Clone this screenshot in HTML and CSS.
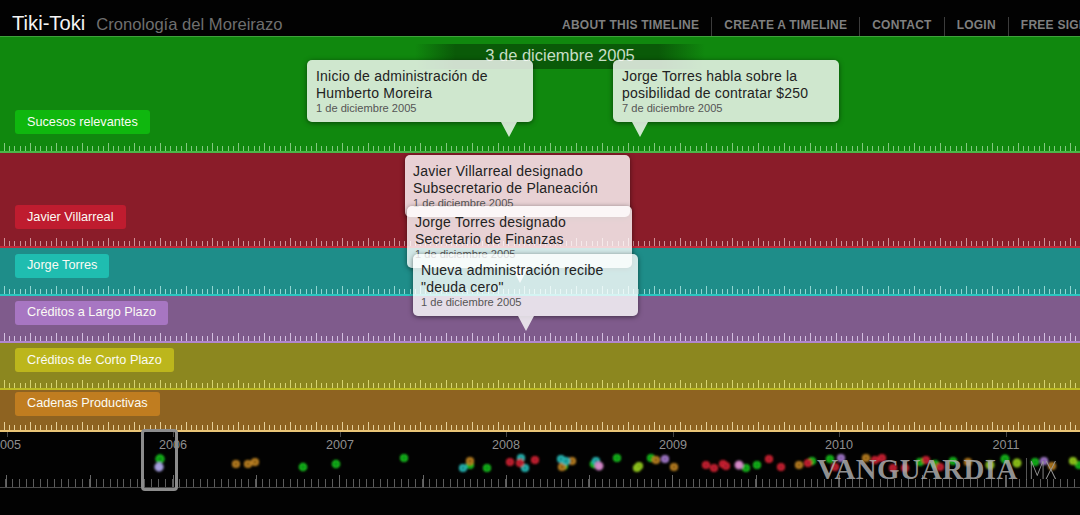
FILE: index.html
```html
<!DOCTYPE html>
<html lang="es">
<head>
<meta charset="utf-8">
<title>Tiki-Toki</title>
<link rel="stylesheet" href="styles.css">
</head>
<body>
<div class="page">
  <header class="top">
    <div class="brand"><span class="logo">Tiki-Toki</span><span class="subtitle">Cronología del Moreirazo</span></div>
    <nav class="nav">
      <a>About this timeline</a><a>Create a timeline</a><a>Contact</a><a>Login</a><a>Free sign up</a>
    </nav>
  </header>

  <main class="bands">
    <section class="band green"><span class="tag">Sucesos relevantes</span><div class="ruler"></div></section>
    <section class="band red"><span class="tag">Javier Villarreal</span><div class="ruler"></div></section>
    <section class="band teal"><span class="tag">Jorge Torres</span><div class="ruler"></div></section>
    <section class="band purple"><span class="tag">Créditos a Largo Plazo</span><div class="ruler"></div></section>
    <section class="band olive"><span class="tag">Créditos de Corto Plazo</span><div class="ruler"></div></section>
    <section class="band brown"><span class="tag">Cadenas Productivas</span><div class="ruler"></div></section>

    <div class="current-date">3 de diciembre 2005</div>

    <article class="card c1 tail-right"><h3>Inicio de administración de Humberto Moreira</h3><p>1 de diciembre 2005</p></article>
    <article class="card c2 tail-left"><h3>Jorge Torres habla sobre la posibilidad de contratar $250</h3><p>7 de diciembre 2005</p></article>
    <article class="card c3"><h3>Javier Villarreal designado Subsecretario de Planeación</h3><p>1 de diciembre 2005</p></article>
    <article class="card c4 tail-mid"><h3>Jorge Torres designado Secretario de Finanzas</h3><p>1 de diciembre 2005</p></article>
    <article class="card c5 tail-mid"><h3>Nueva administración recibe "deuda cero"</h3><p>1 de diciembre 2005</p></article>
  </main>

  <footer class="mini">
    <span class="year y05">2005</span>
    <span class="year y06">2006</span>
    <span class="year y07">2007</span>
    <span class="year y08">2008</span>
    <span class="year y09">2009</span>
    <span class="year y10">2010</span>
    <span class="year y11">2011</span>
    <svg class="dots" width="1080" height="83" viewBox="0 432 1080 83" aria-hidden="true">
      <defs><filter id="soft" x="-50%" y="-50%" width="200%" height="200%"><feGaussianBlur stdDeviation="1"/></filter></defs>
      <g filter="url(#soft)" stroke-width="2.2">
        <g class="d-green">
          <circle cx="160" cy="459" r="3.6"/><circle cx="303" cy="467" r="3.2"/><circle cx="336" cy="464" r="3.2"/><circle cx="404" cy="458" r="3"/><circle cx="470" cy="465" r="3"/><circle cx="487" cy="468" r="3"/><circle cx="564" cy="466" r="3"/><circle cx="594" cy="464" r="3.2"/><circle cx="617" cy="458" r="3"/><circle cx="651" cy="458" r="3"/><circle cx="746" cy="468" r="3"/><circle cx="757" cy="465" r="3"/><circle cx="812" cy="461" r="3"/><circle cx="830" cy="459" r="3"/><circle cx="920" cy="462" r="3"/><circle cx="935" cy="464" r="3"/><circle cx="953" cy="461" r="3"/><circle cx="1005" cy="459" r="3.4"/><circle cx="1035" cy="462" r="3"/><circle cx="1079" cy="465" r="3"/>
        </g>
        <g class="d-lav"><circle cx="159" cy="467" r="3.6"/></g>
        <g class="d-orange">
          <circle cx="236" cy="464" r="3"/><circle cx="248" cy="464" r="3"/><circle cx="255" cy="462" r="3"/><circle cx="470" cy="461" r="3"/><circle cx="562" cy="467" r="3"/><circle cx="572" cy="461" r="3"/><circle cx="656" cy="460" r="3"/><circle cx="674" cy="467" r="3"/><circle cx="799" cy="465" r="3"/><circle cx="866" cy="458" r="3"/><circle cx="968" cy="462" r="3"/><circle cx="1052" cy="466" r="3"/>
        </g>
        <g class="d-teal">
          <circle cx="463" cy="468" r="3"/><circle cx="521" cy="458" r="3"/><circle cx="525" cy="468" r="3"/><circle cx="561" cy="459" r="3"/><circle cx="566" cy="461" r="3"/><circle cx="596" cy="461" r="3"/>
        </g>
        <g class="d-red">
          <circle cx="510" cy="462" r="3"/><circle cx="520" cy="463" r="3"/><circle cx="535" cy="460" r="3"/><circle cx="706" cy="465" r="3"/><circle cx="714" cy="468" r="3"/><circle cx="723" cy="464" r="3"/><circle cx="726" cy="466" r="3"/><circle cx="769" cy="459" r="3"/><circle cx="781" cy="467" r="3"/><circle cx="808" cy="463" r="3"/><circle cx="835" cy="467" r="3"/><circle cx="875" cy="460" r="3"/><circle cx="882" cy="458" r="3"/><circle cx="893" cy="468" r="3"/><circle cx="905" cy="468" r="3"/><circle cx="926" cy="460" r="3"/><circle cx="940" cy="467" r="3"/>
        </g>
        <g class="d-pink"><circle cx="599" cy="466" r="3.4"/><circle cx="739" cy="465" r="3.4"/></g>
        <g class="d-lime"><circle cx="637" cy="468" r="3"/><circle cx="639" cy="466" r="3"/><circle cx="990" cy="465" r="3.4"/><circle cx="1017" cy="463" r="3.4"/><circle cx="1073" cy="461" r="3"/></g>
        <g class="d-purple"><circle cx="665" cy="459" r="3"/><circle cx="841" cy="458" r="3"/><circle cx="1044" cy="461" r="3"/></g>
      </g>
    </svg>
    <div class="mini-ruler"></div>
    <div class="window"></div>
    <div class="watermark"><span class="wm-name">VANGUARDIA</span><span class="wm-mx">MX</span></div>
  </footer>
</div>
</body>
</html>
```
FILE: styles.css
```css
* { box-sizing: border-box; }
html, body { margin: 0; height: 515px; background: #000; overflow: hidden; }
body { font-family: "Liberation Sans", Arial, sans-serif; }
.page { width: 1080px; height: 515px; display: flex; flex-direction: column; overflow: hidden; }

.top { height: 36px; flex: none; display: flex; justify-content: space-between; background: #020202; white-space: nowrap; }
.brand { display: flex; align-items: baseline; padding: 12px 0 0 12px; }
.logo { font-size: 20.2px; line-height: 22px; color: #f4f4f4; }
.subtitle { font-size: 16.6px; color: #6f6f6f; margin-left: 11px; }
.nav { display: flex; align-items: flex-end; flex: none; width: 518px; overflow: hidden; }
.nav a { flex: none; height: 19px; padding: 1px 12px 0; font-size: 12px; font-weight: bold; text-transform: uppercase; color: #7f7f7f; border-right: 1px solid #3c3c3c; letter-spacing: 0.24px; }
.nav a:first-child { padding-left: 0; }

.bands { position: relative; height: 396px; flex: none; display: flex; flex-direction: column; }
.band { display: flex; flex-direction: column; justify-content: flex-end; align-items: flex-start; overflow: hidden; }
.ruler {
  width: 100%; flex: none; height: 12px; margin-top: 6px; filter: blur(.35px);
  background:
    repeating-linear-gradient(90deg, transparent 0 4px, var(--tick) 4px 5px, transparent 5px 26px) 0 2px / 100% 8px no-repeat,
    repeating-linear-gradient(90deg, transparent 0 4px, var(--tick) 4px 5px, transparent 5px 5.2px) 0 5px / 100% 5px no-repeat;
  border-bottom: 2px solid var(--line);
}
.green .ruler, .red .ruler { margin-top: 7px; }
.tag { margin-left: 15px; height: 24px; padding: 0 12px; line-height: 23px; font-size: 12.7px; color: #fbfbf4; border-radius: 3px; background: var(--pill); white-space: nowrap; }
.green .tag, .red .tag, .olive .tag { line-height: 25px; }

.green  { height: 117px; background: #10880e; border-top: 1px solid #3fa23c; --pill: #0fb70e; --tick: #82c880; --line: #4bb648; }
.red    { height: 95px;  background: #8a1c29; --pill: #bf1c2f; --tick: #cf8f97; --line: #c42a3b; }
.teal   { height: 48px;  background: #1e8d89; --pill: #1fbdb0; --tick: #92d6d2; --line: #2ac7c1; }
.purple { height: 47px;  background: #7f5b8c; --pill: #a776c2; --tick: #d3bfe0; --line: #b187cf; }
.olive  { height: 47px;  background: #8c871f; --pill: #bcb61c; --tick: #d7d470; --line: #bdbb22; }
.brown  { height: 42px;  background: #8e6321; --pill: #c07d20; --tick: #e6cf98; --line: #e9c477; }
.brown .ruler { margin-top: 4px; }

.current-date { position: absolute; left: 415px; top: 8px; width: 290px; height: 25px; line-height: 23px; text-align: center; font-size: 16.5px; color: #c8dfc6;
  background: linear-gradient(90deg, rgba(8,72,6,0), #0a5a08 14%, #0a5a08 84%, rgba(8,72,6,0)); }

.card { position: absolute; width: 226px; height: 62px; padding: 8px 9px 0; border-radius: 5px; background: rgba(255,255,255,.8); box-shadow: 0 1px 5px rgba(0,0,0,.5); }
.card h3 { margin: 0; font-size: 14px; font-weight: normal; line-height: 17px; color: #222; letter-spacing: .22px; }
.card p { margin: 0; font-size: 11.1px; line-height: 13px; color: #555; }
.tail-right::after, .tail-left::after, .tail-mid::after { content: ""; position: absolute; top: 62px; width: 0; height: 0; border-style: solid; border-width: 15px 8px 0; border-color: rgba(255,255,255,.8) transparent transparent; }
.tail-right::after { left: 194px; }
.tail-left::after { left: 19px; }
.tail-mid::after { left: 105px; }
.c1 { left: 307px; top: 24px; }
.c2 { left: 613px; top: 24px; }
.c3 { left: 405px; top: 119px; width: 225px; padding-left: 8px; }
.c4 { left: 407px; top: 170px; width: 225px; padding-left: 8px; }
.c5 { left: 413px; top: 218px; width: 225px; padding-left: 8px; }

.mini { position: relative; flex: 1; background: #020202; }
.year { position: absolute; top: 6px; width: 40px; margin-left: -20px; text-align: center; font-size: 12.6px; color: #8f8f8f; }
.year::before { content: ""; position: absolute; left: 20px; top: -6px; width: 1px; height: 5px; background: #444; }
.y05 { left: 7px; } .y06 { left: 173px; } .y07 { left: 340px; } .y08 { left: 506px; } .y09 { left: 673px; } .y10 { left: 839px; } .y11 { left: 1006px; }
.dots { position: absolute; left: 0; top: 0; }
.d-green  { fill: #0b8f12; stroke: #17b81d; }
.d-lav    { fill: #a9a2e0; stroke: #9e98d8; }
.d-orange { fill: #8a5e18; stroke: #b97f22; }
.d-teal   { fill: #1b8c8a; stroke: #25b5b3; }
.d-red    { fill: #a01c2e; stroke: #c9202f; }
.d-pink   { fill: #d88fc8; stroke: #c97fc0; }
.d-lime   { fill: #7fae18; stroke: #8cc21c; }
.d-purple { fill: #7e5aa0; stroke: #a078c8; }

.mini-ruler { position: absolute; left: 0; right: 0; top: 43px; height: 13px; border-bottom: 1px solid #4a4a4a; filter: blur(.35px);
  background:
    repeating-linear-gradient(90deg, transparent 0 6.5px, #666 6.5px 7.5px, transparent 7.5px 83.25px) 0 0 / 100% 12px no-repeat,
    repeating-linear-gradient(90deg, transparent 0 5.5px, #5c5c5c 5.5px 6.5px, transparent 6.5px 6.94px) 0 4px / 100% 8px no-repeat; }
.window { position: absolute; left: 141px; top: -3px; width: 37px; height: 62px; border: 3px solid #8c8c8c; border-radius: 4px; }

.watermark { position: absolute; left: 817px; top: 26px; display: flex; align-items: center; height: 22px; white-space: nowrap; }
.wm-name { font-family: "Liberation Serif", serif; font-weight: bold; font-size: 29px; line-height: 22px; letter-spacing: .3px; color: rgba(178,178,178,.82); }
.wm-mx { margin-left: 8px; padding-left: 3px; border-left: 1px solid #777; font-family: Lato, sans-serif; font-weight: 300; font-size: 25px; line-height: 22px; color: #999; transform: scaleX(.72); transform-origin: left center; }
```
